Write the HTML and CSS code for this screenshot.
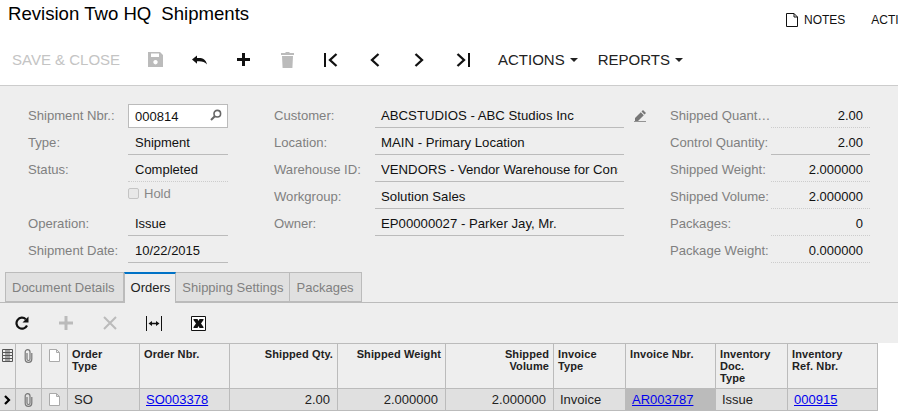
FILE: index.html
```html
<!DOCTYPE html>
<html lang="en">
<head>
<meta charset="utf-8">
<title>Shipments</title>
<link rel="stylesheet" href="styles.css">
</head>
<body>
<div class="page">
  <header class="top">
    <div class="title"><span class="company">Revision Two HQ</span><span class="screen">Shipments</span></div>
    <div class="links">
      <span class="link"><svg class="note" width="12" height="14" viewBox="0 0 12 14"><path d="M.5.500h7.500l3.500 3.500v9.500h-11zM8 .5v3.500h3.500" fill="#fff" stroke="#111"/></svg>NOTES</span>
      <span class="link">ACTIVITY</span>
    </div>
  </header>
  <nav class="toolbar">
    <span class="txt off save">SAVE &amp; CLOSE</span>
    <span class="ico"><svg width="15" height="15" viewBox="0 0 15 15"><path fill="#bbb" fill-rule="evenodd" d="M0 0h12l3 3v12H0zM3 1.500v3.500h8V1.500zM7.500 8a2.200 2.200 0 1 0 .01 0z"/></svg></span>
    <span class="ico"><svg width="15" height="10" viewBox="0 0 15 10"><path fill="#111" d="M0 4.500L5 .5v2.600c5-.6 9 1 10 6.400-2.200-2.800-5.500-3.600-10-3.200v2.400z"/></svg></span>
    <span class="ico"><svg width="13" height="13" viewBox="0 0 13 13"><path fill="#111" d="M5 0h3v5h5v3H8v5H5V8H0V5h5z"/></svg></span>
    <span class="ico"><svg width="13" height="16" viewBox="0 0 13 16"><path fill="#bbb" d="M4.500 0h4v1H13v2H0V1h4.500zM1 4h11l-.6 12H1.600z"/></svg></span>
    <span class="ico"><svg width="14" height="14" viewBox="0 0 14 14"><path fill="#111" d="M0 0h2v14H0z"/><path fill="none" stroke="#111" stroke-width="2.300" d="M12.500 1L6 7l6.500 6"/></svg></span>
    <span class="ico"><svg width="10" height="14" viewBox="0 0 10 14"><path fill="none" stroke="#111" stroke-width="2.300" d="M8.500 1L2 7l6.500 6"/></svg></span>
    <span class="ico"><svg width="10" height="14" viewBox="0 0 10 14"><path fill="none" stroke="#111" stroke-width="2.300" d="M1.500 1L8 7l-6.500 6"/></svg></span>
    <span class="ico"><svg width="14" height="14" viewBox="0 0 14 14"><path fill="#111" d="M12 0h2v14h-2z"/><path fill="none" stroke="#111" stroke-width="2.300" d="M1.500 1L8 7l-6.500 6"/></svg></span>
    <span class="txt menu actions">ACTIONS<i class="caret"></i></span>
    <span class="txt menu">REPORTS<i class="caret"></i></span>
  </nav>
  <main class="panel">
    <section class="form">
      <div class="col col1">
        <div class="row"><label>Shipment Nbr.:</label>
          <div class="input"><span>000814</span><svg width="12" height="12" viewBox="0 0 12 12"><circle cx="7.300" cy="4.700" r="3.300" fill="none" stroke="#666" stroke-width="1.600"/><path d="M4.800 7.200L1 11" stroke="#666" stroke-width="2"/></svg></div></div>
        <div class="row"><label>Type:</label><div class="field solid">Shipment</div></div>
        <div class="row"><label>Status:</label><div class="field dotted">Completed</div></div>
        <div class="row hold"><label></label><div class="check"><i class="box"></i>Hold</div></div>
        <div class="row"><label>Operation:</label><div class="field solid">Issue</div></div>
        <div class="row"><label>Shipment Date:</label><div class="field solid">10/22/2015</div></div>
      </div>
      <div class="col col2">
        <div class="row"><label>Customer:</label><div class="field solid">ABCSTUDIOS - ABC Studios Inc</div>
          <svg class="pencil" width="12" height="12" viewBox="0 0 12 12"><path fill="#777" d="M9 0l3 3-1.500 1.500-3-3zM6.800 2.200l3 3L4 11H1V8zM0 11.200h12v.8H0z"/></svg></div>
        <div class="row"><label>Location:</label><div class="field solid">MAIN - Primary Location</div></div>
        <div class="row"><label>Warehouse ID:</label><div class="field solid"><span class="cut">VENDORS - Vendor Warehouse for Consignment</span></div></div>
        <div class="row"><label>Workgroup:</label><div class="field solid">Solution Sales</div></div>
        <div class="row"><label>Owner:</label><div class="field solid">EP00000027 - Parker Jay, Mr.</div></div>
      </div>
      <div class="col col3">
        <div class="row"><label>Shipped Quant…</label><div class="field dotted num">2.00</div></div>
        <div class="row"><label>Control Quantity:</label><div class="field solid num">2.00</div></div>
        <div class="row"><label>Shipped Weight:</label><div class="field dotted num">2.000000</div></div>
        <div class="row"><label>Shipped Volume:</label><div class="field dotted num">2.000000</div></div>
        <div class="row"><label>Packages:</label><div class="field dotted num">0</div></div>
        <div class="row"><label>Package Weight:</label><div class="field dotted num">0.000000</div></div>
      </div>
    </section>
    <div class="tabs">
      <span class="tab tab-doc">Document Details</span>
      <span class="tab active">Orders</span>
      <span class="tab tab-ship">Shipping Settings</span>
      <span class="tab">Packages</span>
    </div>
    <div class="gridbar">
      <span class="ico"><svg width="14" height="14" viewBox="0 0 14 14"><path fill="none" stroke="#111" stroke-width="2.200" d="M12 9.500A5.500 5.500 0 1 1 10.800 3.200"/><path fill="#111" d="M13.500 .5v6h-6z"/></svg></span>
      <span class="ico"><svg width="14" height="14" viewBox="0 0 14 14"><path fill="#bbb" d="M5.500 0h3v5.500H14v3H8.500V14h-3V8.500H0v-3h5.500z"/></svg></span>
      <span class="ico"><svg width="14" height="14" viewBox="0 0 14 14"><path fill="none" stroke="#bbb" stroke-width="2" d="M1 1l12 12M13 1L1 13"/></svg></span>
      <span class="ico"><svg width="16" height="15" viewBox="0 0 16 15"><path fill="#111" d="M0 0h1v15H0zM15 0h1v15h-1zM2.500 7.500L6 5v1.800h4V5l3.500 2.500L10 10V8.200H6V10z"/></svg></span>
      <span class="ico"><svg width="15" height="15" viewBox="0 0 15 15"><path fill="#fff" stroke="#111" d="M.5.500h14v14H.5z"/><path fill="#111" d="M2.500 3h4l1 2 1-2h4v1l-2.500 3.500 2.500 3.500v1h-4l-1-2-1 2h-4v-1L5 7.500 2.500 4z"/></svg></span>
    </div>
  </main>
  <div class="grid">
    <div class="hd c"><svg width="11" height="13" viewBox="0 0 11 13"><path fill="none" stroke="#555" d="M.5.500h10v3H.5zM.5 3.500h10v3H.5zM.5 6.500h10v3H.5zM.5 9.500h10v3H.5z"/><path stroke="#555" d="M3 2h5M3 5h5M3 8h5M3 11h5"/></svg></div>
    <div class="hd c"><svg class="clip" width="9" height="14" viewBox="0 0 9 14"><path fill="none" stroke="#777" stroke-width="1.200" d="M3 4v6a1.500 1.500 0 0 0 3 0V3A2.300 2.300 0 0 0 1.200 3v7a3.300 3.300 0 0 0 6.600 0V4"/></svg></div>
    <div class="hd c"><svg width="11" height="13" viewBox="0 0 11 13"><path fill="#fff" stroke="#aaa" d="M.5.500h7l3 3v9h-10zM7.500.5v3h3"/></svg></div>
    <div class="hd">Order<br>Type</div>
    <div class="hd">Order Nbr.</div>
    <div class="hd right">Shipped Qty.</div>
    <div class="hd right">Shipped Weight</div>
    <div class="hd right">Shipped<br>Volume</div>
    <div class="hd">Invoice<br>Type</div>
    <div class="hd">Invoice Nbr.</div>
    <div class="hd">Inventory<br>Doc.<br>Type</div>
    <div class="hd">Inventory<br>Ref. Nbr.</div>

    <div class="td c"><svg width="7" height="10" viewBox="0 0 7 10"><path fill="none" stroke="#000" stroke-width="2.200" d="M1 1l4 4-4 4"/></svg></div>
    <div class="td c"><svg class="clip" width="9" height="14" viewBox="0 0 9 14"><path fill="none" stroke="#777" stroke-width="1.200" d="M3 4v6a1.500 1.500 0 0 0 3 0V3A2.300 2.300 0 0 0 1.200 3v7a3.300 3.300 0 0 0 6.600 0V4"/></svg></div>
    <div class="td c"><svg width="11" height="13" viewBox="0 0 11 13"><path fill="#fff" stroke="#aaa" d="M.5.500h7l3 3v9h-10zM7.500.5v3h3"/></svg></div>
    <div class="td">SO</div>
    <div class="td"><a href="#">SO003378</a></div>
    <div class="td right">2.00</div>
    <div class="td right">2.000000</div>
    <div class="td right">2.000000</div>
    <div class="td">Invoice</div>
    <div class="td focus"><a href="#">AR003787</a></div>
    <div class="td">Issue</div>
    <div class="td"><a href="#">000915</a></div>
  </div>
</div>
</body>
</html>
```
FILE: styles.css
```css
* { box-sizing: border-box; }
html, body { margin: 0; padding: 0; background: #fff; }
body { font-family: "Liberation Sans", Arial, sans-serif; color: #111; overflow: hidden; }
.page { width: 898px; height: 415px; overflow: hidden; }

.top { display: flex; height: 40px; white-space: nowrap; }
.title { flex: none; width: 786px; padding: 3px 0 0 8px; font-size: 18.600px; line-height: 22px; color: #000; }
.screen { margin-left: 10px; }
.links { display: flex; flex: none; gap: 26px; padding-top: 13px; font-size: 12px; line-height: 14px; }
.link { display: flex; align-items: center; height: 14px; }
.note { margin-right: 6px; }

.toolbar { display: flex; align-items: center; height: 45px; padding-bottom: 6px; font-size: 15px; white-space: nowrap; }
.txt { color: #222; }
.off { color: #c4c4c4; }
.save { width: 133px; padding-left: 12px; }
.ico { display: flex; align-items: center; justify-content: center; width: 44px; flex: none; }
.menu { display: flex; align-items: center; margin-left: 20px; }
.actions { margin-left: 13px; }
.caret { margin-left: 5px; border: 4px solid transparent; border-top-color: #222; border-bottom: 0; }

.panel { height: 258px; background: #eee; border-top: 1px solid #ccc; }
.form { display: flex; height: 186px; padding: 15px 0 0 28px; font-size: 13px; }
.col { flex: none; }
.col1 { width: 246px; }
.col2 { width: 396px; }
.col3 { width: 200px; }
.row { display: flex; position: relative; height: 27px; }
.row label { flex: none; width: 100px; padding-top: 7px; color: #808080; font-size: 13.100px; line-height: 15px; white-space: nowrap; }
.col2 .row label, .col3 .row label { width: 101px; }
.field { height: 27px; width: 100px; padding: 7px 7px 0; line-height: 16px; color: #111; white-space: nowrap; overflow: hidden; }
.col2 .field { width: 249px; padding: 7px 6px 0; font-size: 13.200px; }
.col3 .field { width: 99px; }
.cut { display: block; overflow: hidden; }
.solid { border-bottom: 1px solid #bbb; }
.dotted { border-bottom: 1px dotted #ccc; }
.num { text-align: right; }
.input { display: flex; align-items: center; justify-content: space-between; width: 100px; height: 24px; margin-top: 3px; padding: 0 5px 0 6px; background: #fff; border: 1px solid #bbb; }
.input svg { margin-bottom: 2px; }
.check { display: flex; align-items: center; height: 23px; color: #888; }
.box { width: 11px; height: 11px; margin-right: 5px; background: #e8e8e8; border: 1px solid #c4c4c4; border-radius: 2px; }
.pencil { position: absolute; left: 360px; top: 9px; }

.tabs { display: flex; height: 31px; padding-left: 5px; border-bottom: 1px solid #bbb; font-size: 13px; }
.tab { height: 30px; padding: 7px 7px 0; line-height: 16px; color: #808080; background: #e0e0e0; border: 1px solid #bbb; border-left: 0; }
.tab-doc { padding: 7px 8px 0 6px; border-left: 1px solid #bbb; }
.tab-ship { padding: 7px 5px 0 6px; }
.tab.active { height: 31px; padding: 6px 5px 0 6px; color: #222; background: #eee; border-top: 2px solid #0072c6; border-bottom: 0; border-left: 1px solid #bbb; }
.gridbar { display: flex; align-items: center; height: 40px; }

.grid { display: grid; width: 878px; grid-template-columns: 16px 26px 26px 72px 90px 108px 108px 108px 72px 90px 72px 90px; grid-template-rows: 45px 22px; border-top: 1px solid #bbb; }
.hd, .td { border-right: 1px solid #bbb; border-bottom: 1px solid #bbb; padding: 0 7px 0 6px; white-space: nowrap; min-width: 0; }
.hd { background: #eee; font-size: 11px; font-weight: 700; line-height: 12px; padding: 4px 4px 0 4px; color: #222; letter-spacing: .1px; }
.td { background: #e0e0e0; font-size: 13px; line-height: 21px; color: #222; }
.hd.c, .td.c { padding: 0; display: flex; justify-content: center; }
.hd.c { padding-top: 5px; align-items: flex-start; }
.td.c { align-items: center; }
.right { text-align: right; }
.focus { background: #bbb; }
a { color: #0000ee; }
```
